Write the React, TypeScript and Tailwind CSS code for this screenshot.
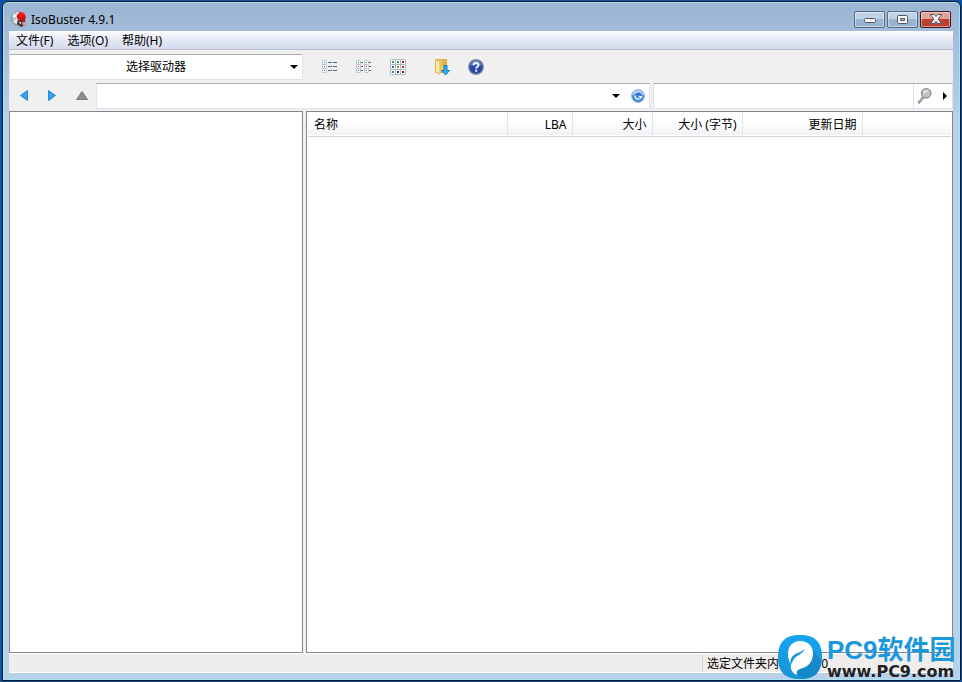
import type { ReactNode } from 'react';

type IconProps = { className?: string };

const menuItems = ['文件(F)', '选项(O)', '帮助(H)'];

const columns = [
  { label: '名称', className: 'w-[199px] text-left pl-[6px]' },
  { label: 'LBA', className: 'w-[65px] text-right pr-[5px]' },
  { label: '大小', className: 'w-[80px] text-right pr-[5px]' },
  { label: '大小 (字节)', className: 'w-[90px] text-right pr-[5px]' },
  { label: '更新日期', className: 'w-[120px] text-right pr-[5px]' },
];

function AppIcon() {
  return (
    <svg width="16" height="16" viewBox="0 0 16 16" aria-hidden="true">
      <circle cx="7" cy="7.500" r="6.500" fill="#b9c6cc" stroke="#7c8688" />
      <path d="M7 7 1 5.500 3.500 2zM7 7 6 13 2 11z" fill="#e6eeee" />
      <path d="M7 7 5 1.500 8 1z" fill="#f4faf4" />
      <path d="M6.500 9.500c3-1 6.500-.5 8.500 2l-1 3-4 1.500-4-3z" fill="#4a2c30" />
      <circle cx="10.200" cy="5.500" r="4.300" fill="#ef0c0c" />
      <path d="M5.500 5.500c2-2 5-2 9 .5l-.5 4-3 .5-1.500-3z" fill="#c01418" />
      <path d="M8 2.500c2-1.500 4-1 5 1l-2 3-3-1z" fill="#ff1a14" />
      <path d="M11 11h4v3l-3 1z" fill="#d29a98" />
      <path d="m7.500 10.500 3 1-1 2z" fill="#eee" />
    </svg>
  );
}

function ListIcon() {
  return (
    <svg width="16" height="14" viewBox="0 0 16 14" aria-hidden="true">
      {['#2c9960', '#e22020', '#2060c8'].map((color, i) => (
        <g key={color} transform={`translate(0 ${i * 4})`}>
          <rect x="0.500" y="0.500" width="4" height="4" rx="1" fill="#fff" stroke="#b3bccb" />
          <path d="M2 2h1v1H2z" fill={color} />
          <path d="M6 2.500h4m1 0h4" stroke="#586a88" />
        </g>
      ))}
    </svg>
  );
}

function SmallIconsIcon() {
  return (
    <svg width="16" height="14" viewBox="0 0 16 14" aria-hidden="true">
      {['#2c9960', '#e22020', '#2060c8'].map((color, i) => (
        <g key={color} transform={`translate(0 ${i * 4})`}>
          <rect x="0.500" y="0.500" width="4" height="4" rx="1" fill="#fff" stroke="#b3bccb" />
          <rect x="8.500" y="0.500" width="4" height="4" rx="1" fill="#fff" stroke="#b3bccb" />
          <path d="M2 2h1v1H2zM10 2h1v1h-1z" fill={color} />
          <path d="M5 2.500h2m6 0h2" stroke="#586a88" />
        </g>
      ))}
    </svg>
  );
}

function LargeIconsIcon() {
  const dots = [
    ['#2c9990', '#2c9950', '#b01818'],
    ['#3366aa', '#8a9a20', '#e22020'],
    ['#20a070', '#204080', '#a01010'],
  ];
  return (
    <svg width="16" height="16" viewBox="0 0 16 16" aria-hidden="true">
      {dots.map((row, y) =>
        row.map((color, x) => (
          <g key={color} transform={`translate(${x * 5} ${y * 5})`}>
            <rect x="0.500" y="0.500" width="5" height="5" rx="1" fill="#fff" stroke="#a5aebe" />
            <path d="M2 2h2v2H2z" fill={color} />
          </g>
        )),
      )}
    </svg>
  );
}

function ExtractIcon() {
  return (
    <svg width="16" height="18" viewBox="0 0 16 18" aria-hidden="true">
      <path d="M1.500 1.500h11v13h-11z" fill="#edca62" stroke="#d9b04a" />
      <path d="m1.500 1.500 4.500 2v12.500l-4.500-2z" fill="#fae9a4" stroke="#dcb956" />
      <path d="M8.500 2h3.500v7H8.500z" fill="#e0b33c" />
      <path d="M10 7.500h3v5h2.500l-4 4.500-4-4.500H10z" fill="#2fb1f2" stroke="#157ac0" />
    </svg>
  );
}

function HelpIcon() {
  return (
    <svg width="16" height="16" viewBox="0 0 16 16" aria-hidden="true">
      <circle cx="8" cy="8" r="7.300" fill="#2846a4" stroke="#8a8f9a" strokeWidth="1.400" />
      <path d="M2.500 7a5.500 5.500 0 0 1 11 0c-3-1-7-1-11 0z" fill="#5d80d2" />
      <path d="M5.700 6.200c0-3 4.800-3 4.800-.2 0 1.800-2.300 1.600-2.300 3.500" fill="none" stroke="#fff" strokeWidth="1.900" />
      <path d="M7.200 10.700h2v2h-2z" fill="#fff" />
    </svg>
  );
}

function RefreshIcon() {
  return (
    <svg width="14" height="14" viewBox="0 0 14 14" aria-hidden="true">
      <circle cx="7" cy="7" r="6.400" fill="#3f88da" stroke="#8fb2df" />
      <path d="M1.200 6.500a5.800 5.800 0 0 1 11.600 0c-2 0-3-2-6-2s-4 2-5.600 2z" fill="#a9cdf2" />
      <path d="M3.800 6.500c.2 3 2.500 4.300 4.700 3" fill="none" stroke="#e8f4ff" strokeWidth="1.500" />
      <path d="M5.500 5.500c1.500-2 4.500-1 4.500 1.500" fill="none" stroke="#2c6cc4" strokeWidth="1.500" />
      <path d="M7.500 7h4L9.800 10.500z" fill="#e8f4ff" />
    </svg>
  );
}

function SearchIcon() {
  return (
    <svg width="16" height="18" viewBox="0 0 16 18" aria-hidden="true">
      <path d="M6 10.500 2 15.300" stroke="#858585" strokeWidth="2.600" strokeLinecap="round" />
      <path d="M5.500 11 2 15" stroke="#d5d5d5" strokeLinecap="round" />
      <circle cx="9.200" cy="6.300" r="4.700" fill="#c4c4c4" stroke="#8c8c8c" strokeWidth="1.300" />
      <path d="M6.200 6a3.200 3.200 0 0 1 5-2.500C10 5.500 8 6 6.200 6z" fill="#e8e8e8" />
    </svg>
  );
}

function DownArrow({ className }: IconProps) {
  return (
    <svg className={className} width="8" height="4" viewBox="0 0 8 4" aria-hidden="true">
      <path d="M0 0h8L4 4z" fill="#000" />
    </svg>
  );
}

function WindowButton({ label, close, children }: { label: string; close?: boolean; children: ReactNode }) {
  return (
    <button
      aria-label={label}
      className={`flex h-[17px] w-[31px] items-center justify-center rounded-[2px] border shadow-[inset_0_0_0_1px_rgba(255,255,255,0.45)] ${
        close
          ? 'border-[#471520] bg-linear-to-b from-[#dfa39a] from-45% to-[#ba4030] to-50%'
          : 'border-[#566a84] bg-linear-to-b from-[#c0d2e6] from-45% to-[#98b4d1] to-50%'
      }`}
    >
      {children}
    </button>
  );
}

function TitleBar() {
  return (
    <header className="flex h-[29px] items-center px-[2px] pt-[5px]">
      <AppIcon />
      <h1 className="ml-1 flex-1 pt-px text-[12px]">IsoBuster 4.9.1</h1>
      <div className="flex gap-[2px]">
        <WindowButton label="最小化">
          <svg className="mt-1" width="12" height="6" viewBox="0 0 12 6" aria-hidden="true">
            <rect x="0.500" y="0.500" width="11" height="4" rx="1" fill="#f7f7f7" stroke="#535666" />
          </svg>
        </WindowButton>
        <WindowButton label="最大化">
          <svg width="12" height="9" viewBox="0 0 12 9" aria-hidden="true">
            <rect x="0.500" y="0.500" width="10" height="8" rx="1" fill="#f7f7f7" stroke="#535666" />
            <path d="M3.500 3.500h4v2h-4z" fill="#a0bad6" stroke="#535666" />
          </svg>
        </WindowButton>
        <WindowButton label="关闭" close>
          <svg width="12" height="10" viewBox="0 0 12 10" aria-hidden="true">
            <path
              d="M.5.500h3.800L6 2.500 7.700.500h3.800L8.200 5l3.300 4.500H7.700L6 7.500l-1.700 2H.5L3.800 5z"
              fill="#f7f7f7"
              stroke="#535666"
            />
          </svg>
        </WindowButton>
      </div>
    </header>
  );
}

function MenuBar() {
  return (
    <nav className="flex h-[19px] items-center border-b border-[#b6bccc] bg-linear-to-b from-white via-[#e4e8f5] to-[#d5dbee]">
      {menuItems.map((item) => (
        <button key={item} className="px-[7px] pt-[2px] leading-4">
          {item}
        </button>
      ))}
    </nav>
  );
}

function Toolbar() {
  return (
    <div className="flex h-[31px] items-center pt-[3px]">
      <div className="relative h-[26px] w-[294px] border border-[#e2e3ea] border-t-[#abadb3] bg-white">
        <select aria-label="驱动器" className="h-full w-full appearance-none text-center outline-none">
          <option>选择驱动器</option>
        </select>
        <DownArrow className="pointer-events-none absolute top-[10px] right-1" />
      </div>
      <div className="ml-[19px] flex items-center gap-[18px]">
        <button aria-label="列表"><ListIcon /></button>
        <button aria-label="小图标"><SmallIconsIcon /></button>
        <button aria-label="大图标"><LargeIconsIcon /></button>
        <button aria-label="提取" className="ml-[10px]"><ExtractIcon /></button>
        <button aria-label="帮助"><HelpIcon /></button>
      </div>
    </div>
  );
}

function AddressBar() {
  return (
    <div className="flex h-[30px] items-center pb-px">
      <div className="flex w-[87px] items-center gap-5 pl-[11px]">
        <button aria-label="后退">
          <svg width="8" height="11" viewBox="0 0 8 11" aria-hidden="true">
            <path d="M7.500.500v10L.5 5.500z" fill="#35a0ec" stroke="#2389d6" />
          </svg>
        </button>
        <button aria-label="前进">
          <svg width="8" height="11" viewBox="0 0 8 11" aria-hidden="true">
            <path d="M.5.500v10l7-5z" fill="#35a0ec" stroke="#2389d6" />
          </svg>
        </button>
        <button aria-label="向上">
          <svg width="12" height="9" viewBox="0 0 12 9" aria-hidden="true">
            <path d="M6 .5.500 8.500h11z" fill="#8c8c8c" stroke="#787878" />
          </svg>
        </button>
      </div>
      <div className="flex h-[26px] flex-1 items-center border border-[#e2e3ea] border-t-[#abadb3] bg-white">
        <input aria-label="地址" className="h-full min-w-0 flex-1 px-1 outline-none" />
        <button aria-label="历史记录" className="px-[11px]"><DownArrow /></button>
        <button aria-label="刷新" className="mr-1"><RefreshIcon /></button>
      </div>
      <div className="ml-[3px] flex h-[26px] w-[300px] items-center border border-[#e2e3ea] border-t-[#abadb3] bg-white">
        <input aria-label="搜索内容" className="h-full min-w-0 flex-1 border-r border-[#dcdfe6] px-1 outline-none" />
        <button aria-label="搜索" className="pl-[3px]"><SearchIcon /></button>
        <button aria-label="搜索选项" className="pr-[5px] pl-[10px]">
          <svg width="4" height="8" viewBox="0 0 4 8" aria-hidden="true">
            <path d="M0 0v8l4-4z" fill="#000" />
          </svg>
        </button>
      </div>
    </div>
  );
}

function FileList() {
  return (
    <main className="min-w-0 flex-1 overflow-hidden border border-[#828790] bg-white px-px">
      <table className="w-full table-fixed border-collapse">
        <thead>
          <tr className="h-6 border-b border-[#d5d5d5] bg-linear-to-b from-white from-45% to-[#f1f2f4]">
            {columns.map((col) => (
              <th key={col.label} scope="col" className={`border-r border-[#e3e4e6] p-0 pt-[2px] font-normal ${col.className}`}>
                {col.label}
              </th>
            ))}
            <td />
          </tr>
        </thead>
      </table>
    </main>
  );
}

function StatusBar() {
  return (
    <footer className="flex h-5 items-center border-y border-white bg-[#f0eded]">
      <div className="flex-1" />
      <p className="w-[251px] border-l border-[#d5d5d5] pl-1 leading-[17px]">选定文件夹内的文件: 0</p>
    </footer>
  );
}

function SiteBadge() {
  return (
    <div className="absolute right-0 bottom-px flex items-center gap-[5px]">
      <svg width="44" height="44" viewBox="0 0 44 44" aria-hidden="true">
        <defs>
          <linearGradient id="badge" x1="0" y1="0" x2="0" y2="1">
            <stop offset="0" stopColor="#14a5ee" />
            <stop offset="1" stopColor="#1793d6" />
          </linearGradient>
        </defs>
        <path d="M22 0c15 0 22 7 22 22s-7 22-22 22S0 37 0 22 7 0 22 0z" fill="url(#badge)" />
        <path d="M33 13 43 25c-1 12-6 17-17 19l-9-6z" fill="#147fbe" opacity="0.600" />
        <path
          d="M22 6c8 0 13 5 13 12 0 9-5 14-13 16-3 1-4 3-3 6-5-2-7-6-6-11-2-2-3-6-3-10C10 11 15 6 22 6z"
          fill="#fff"
        />
        <path d="M26 14c0 5-8 6-10 10-1 2-2 3-3 6-1-3-1-5 1-8 2-4 9-4 12-8z" fill="#1698dc" />
      </svg>
      <div className="w-[133px] whitespace-nowrap text-[#1b98dc]">
        <p className="font-['Liberation_Sans','Noto_Sans_CJK_SC',sans-serif] text-[26px] leading-[30px] font-bold">PC9软件园</p>
        <p className="font-['DejaVu_Sans',sans-serif] text-[16px] leading-[14px] font-bold text-[#222]">www.PC9.com</p>
      </div>
    </div>
  );
}

export default function App() {
  return (
    <div className="flex min-h-screen flex-col bg-[#0b55a8] pt-px pr-px pb-px pl-[2px] font-['Noto_Sans','Noto_Sans_CJK_SC',sans-serif] text-[12px] leading-4 text-black">
      <div className="relative flex flex-1 flex-col rounded-t-md border border-[#0b1622] bg-[#b9d1ea] bg-linear-to-b from-[#9ab5d3] to-[#b9d1ea] to-[120px] pr-[7px] pb-[7px] pl-[6px] shadow-[inset_0_0_0_1px_#a5e2f5]">
        <TitleBar />
        <MenuBar />
        <div className="flex flex-1 flex-col bg-[#f0f0f0]">
          <Toolbar />
          <AddressBar />
          <div className="flex flex-1 gap-[3px]">
            <aside className="w-[294px] border border-[#828790] bg-white" />
            <FileList />
          </div>
        </div>
        <StatusBar />
        <SiteBadge />
      </div>
    </div>
  );
}
